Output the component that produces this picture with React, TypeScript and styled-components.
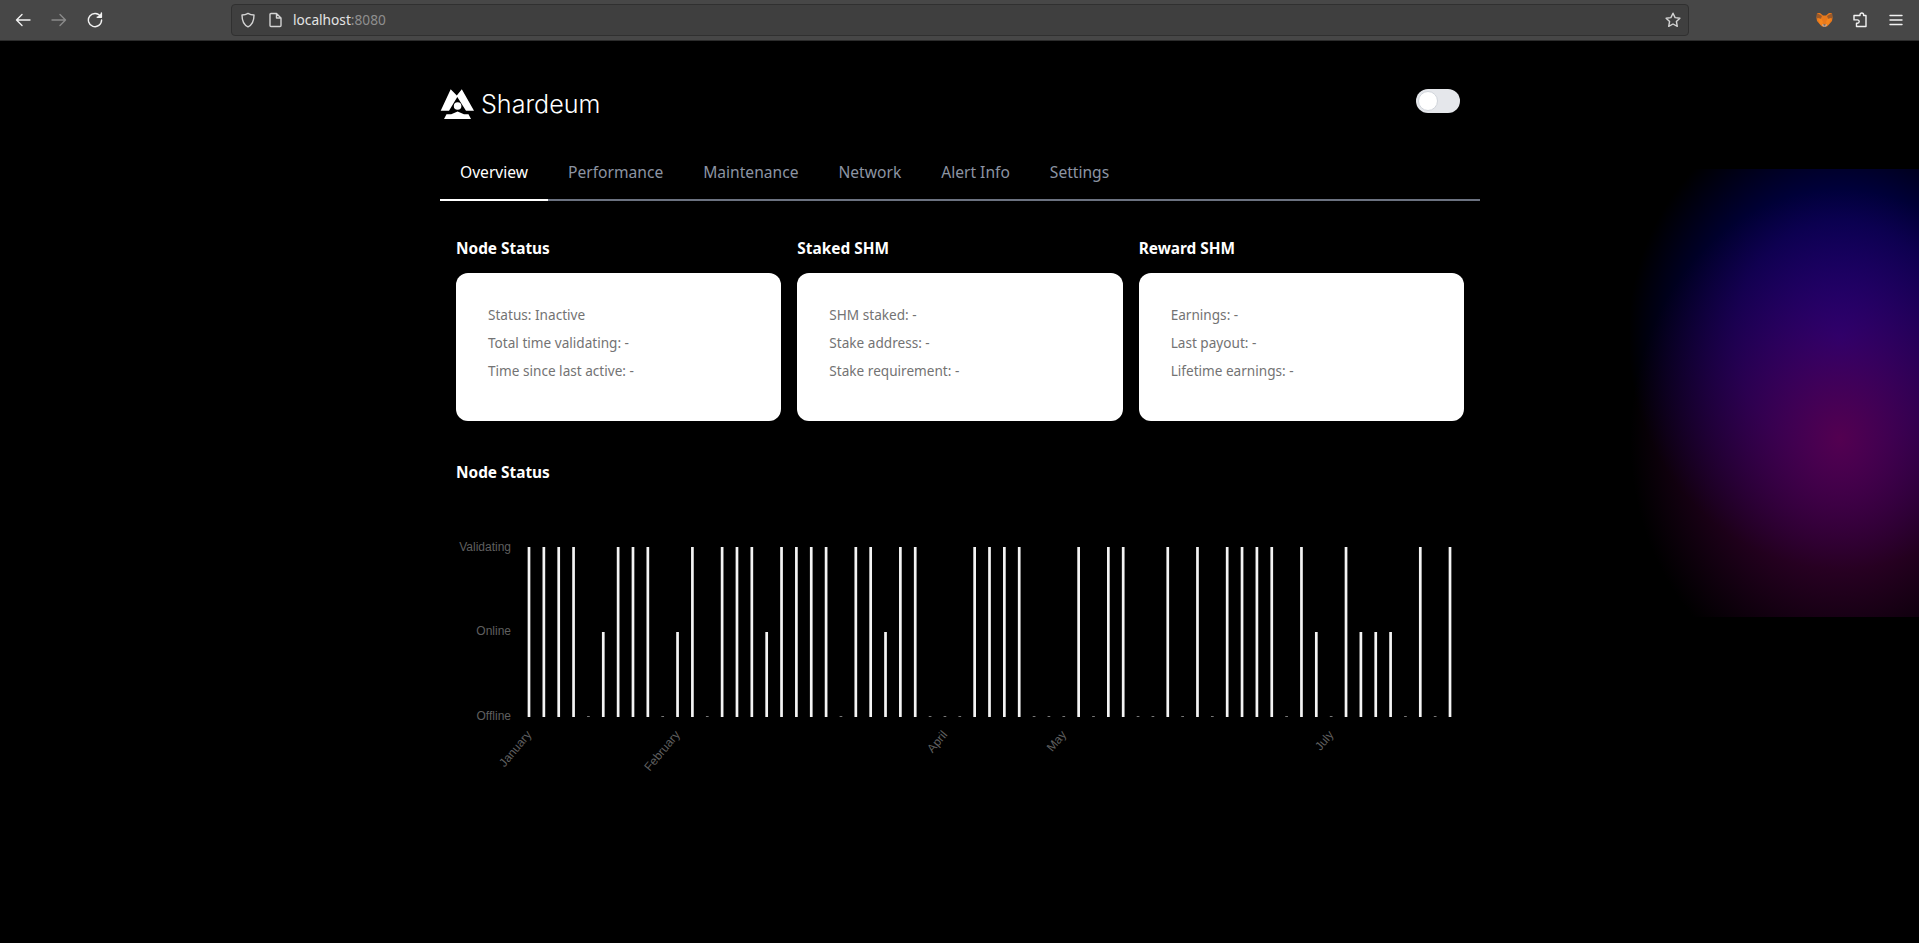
import React from "react";
import styled, { createGlobalStyle } from "styled-components";

const GlobalStyle = createGlobalStyle`
  html, body {
    margin: 0;
    padding: 0;
    height: 100%;
    background: #000;
    overflow: hidden;
  }
  * {
    box-sizing: border-box;
  }
`;

const Page = styled.div`
  position: relative;
  height: 943px;
  overflow: hidden;
  background: #000;
  font-family: "Noto Sans", "Open Sans", sans-serif;
`;

const Glow = styled.div`
  position: absolute;
  top: 169px;
  right: 0;
  width: 289px;
  height: 448px;
  background:
    radial-gradient(ellipse 210px 250px at 210px 270px, rgba(92, 0, 80, 0.9), rgba(92, 0, 80, 0) 100%),
    radial-gradient(ellipse 212px 232px at 210px 168px, #000086 0%, #000050 50%, #000028 75%, rgba(0, 0, 0, 0) 100%);
`;

const BrowserBar = styled.div`
  display: flex;
  align-items: center;
  height: 41px;
  padding: 0 14px 1px 5px;
  background: #474747;
  border-bottom: 1px solid #2c2c2c;
`;

const NavButton = styled.div<{ $color?: string }>`
  display: flex;
  align-items: center;
  justify-content: center;
  width: 36px;
  height: 32px;
  flex: none;
  color: ${(props) => props.$color || "#f2f2f2"};
`;

const NavGroup = styled.div`
  display: flex;
  align-items: center;
  margin-right: 118px;
`;

const UrlBar = styled.div`
  display: flex;
  align-items: center;
  width: 1458px;
  height: 32px;
  flex: none;
  padding: 0 7px 0 8px;
  background: #3f3f3f;
  border: 1px solid #303030;
  border-radius: 4px;
`;

const UrlText = styled.div`
  flex: 1;
  margin-left: 11px;
  font-size: 13.7px;
  color: #e4e4e4;
`;

const UrlPort = styled.span`
  color: #8f8f8f;
`;

const UrlIcon = styled.div<{ $gap?: number }>`
  display: flex;
  margin-right: ${(props) => props.$gap ?? 0}px;
  color: #d4d4d4;
`;

const ExtGroup = styled.div`
  display: flex;
  align-items: center;
  margin-left: 117px;
`;

const Main = styled.main`
  position: relative;
  width: 1040px;
  margin-left: 440px;
`;

const Header = styled.header`
  display: flex;
  align-items: flex-start;
  justify-content: space-between;
  padding: 47px 20px 0 0;
  height: 112px;
`;

const Brand = styled.div`
  display: flex;
  align-items: center;
  height: 32px;
`;

const BrandName = styled.span`
  margin-left: 6px;
  font-family: "Inter", sans-serif;
  font-weight: 300;
  font-size: 25.1px;
  line-height: 32px;
  color: #fff;
`;

const Toggle = styled.div`
  display: flex;
  align-items: center;
  width: 44px;
  height: 24px;
  margin-top: 1px;
  padding: 2px;
  background: #e5e7eb;
  border-radius: 12px;
`;

const Knob = styled.div`
  width: 20px;
  height: 20px;
  background: #fff;
  border: 1px solid #d1d5db;
  border-radius: 50%;
`;

const Tabs = styled.nav`
  display: flex;
  height: 48px;
  border-bottom: 2px solid #6b7280;
`;

const Tab = styled.div<{ $active?: boolean }>`
  height: 48px;
  padding: 0 20px;
  font-size: 15.6px;
  line-height: 38px;
  color: ${(props) => (props.$active ? "#fff" : "#8c94a3")};
  border-bottom: 2px solid ${(props) => (props.$active ? "#fff" : "transparent")};
`;

const Content = styled.section`
  padding: 36px 16px 0;
`;

const CardGrid = styled.div`
  display: grid;
  grid-template-columns: repeat(3, 1fr);
  column-gap: 16px;
`;

const SectionTitle = styled.h2`
  margin: 0 0 12px;
  font-size: 15.4px;
  font-weight: 700;
  line-height: 24px;
  color: #fff;
`;

const Card = styled.div`
  height: 148px;
  padding: 28px 32px;
  background: #fff;
  border-radius: 12px;
`;

const CardLine = styled.p`
  margin: 0;
  font-size: 13.6px;
  line-height: 28px;
  color: #737373;
`;

const ChartTitle = styled(SectionTitle)`
  margin: 40px 0 0;
`;

const ChartSvg = styled.svg`
  display: block;
  margin-top: 40px;
`;

const AxisLabel = styled.text`
  font-family: "Liberation Sans", Arial, sans-serif;
  font-size: 12px;
  fill: #5f5f5f;
`;

const ToolbarIcon = ({ children, w = 16, h = 16 }: { children: React.ReactNode; w?: number; h?: number }) => (
  <svg width={w} height={h} viewBox={`0 0 ${w} ${h}`} fill="none" stroke="currentColor" strokeWidth="1.4" strokeLinecap="round" strokeLinejoin="round">
    {children}
  </svg>
);

const Fox = () => (
  <svg width="17" height="15" viewBox="0 0 17 15">
    <path d="M1 1h3l3 2.500h3L13 1h3l.5 5-.5 3-3 3.500-2 2H6l-2-2L1 9 .5 6z" fill="#e8791c" />
    <path d="M1 1l5 3-1.500 3.500L1 6zM16 1l-5 3 1.500 3.500L16 6z" fill="#9c5a2a" />
    <path d="M2 6l3.500 1L7 10l-1 3-2-1zM15 6l-3.500 1L10 10l1 3 2-1z" fill="#f6851b" />
    <path d="M6 12.500h5l-1 2H7z" fill="#d7c1b3" />
    <path d="M7.500 12.500h2v1h-2z" fill="#233447" />
  </svg>
);

const Logo = () => (
  <svg width="35" height="32" viewBox="0 0 35 32">
    <path d="M.7 22.800 10.700 1.300 16.800 7.500 21.800 1.300 34 22.800H26L17.300 9 9 22.800z" fill="#fff" />
    <circle cx="17.600" cy="18" r="3.800" fill="#fff" />
    <path d="M17.600 23.400 24 26.300H28.500L31 31H4L6.500 26.300H11.200z" fill="#fff" />
  </svg>
);

const V = 2;
const O = 1;
const X = 0;

// one value per day, read off the chart
const statusData = [
  V, V, V, V, X, O, V, V, V, X, O, V, X, V, V, V, O, V, V, V, V, X, V, V, O, V, V, X,
  X, X, V, V, V, V, X, X, X, V, X, V, V, X, X, V, X, V, X, V, V, V, V, X, V, O, X, V,
  O, O, O, X, V, X, V,
];

const monthTicks = [
  { index: 0, label: "January" },
  { index: 10, label: "February" },
  { index: 28, label: "April" },
  { index: 36, label: "May" },
  { index: 54, label: "July" },
];

const yLabels = [
  { y: 22.5, label: "Validating" },
  { y: 106.5, label: "Online" },
  { y: 191.5, label: "Offline" },
];

const CHART_LEFT = 73;
const STEP = 14.855;
const BASE = 192;
const BAR_WIDTH = 2.7;
const heights = [1, 85, 170];

const StatusChart = () => (
  <ChartSvg width={1008} height={260} viewBox="0 0 1008 260">
    {yLabels.map((item) => (
      <AxisLabel key={item.label} x={55} y={item.y} textAnchor="end" dominantBaseline="middle">
        {item.label}
      </AxisLabel>
    ))}
    {statusData.map((value, i) => (
      <rect
        key={i}
        x={CHART_LEFT + i * STEP - BAR_WIDTH / 2}
        y={BASE - heights[value]}
        width={BAR_WIDTH}
        height={heights[value]}
        fill={value === X ? "#777" : "#f4f4f4"}
      />
    ))}
    {monthTicks.map((tick) => (
      <AxisLabel
        key={tick.label}
        textAnchor="end"
        transform={`translate(${CHART_LEFT + tick.index * STEP + 3} 210) rotate(-50)`}
      >
        {tick.label}
      </AxisLabel>
    ))}
  </ChartSvg>
);

const cards = [
  { title: "Node Status", lines: ["Status: Inactive", "Total time validating: -", "Time since last active: -"] },
  { title: "Staked SHM", lines: ["SHM staked: -", "Stake address: -", "Stake requirement: -"] },
  { title: "Reward SHM", lines: ["Earnings: -", "Last payout: -", "Lifetime earnings: -"] },
];

const tabs = ["Overview", "Performance", "Maintenance", "Network", "Alert Info", "Settings"];

export default function App() {
  return (
    <Page>
      <GlobalStyle />
      <Glow />
      <BrowserBar>
        <NavGroup>
          <NavButton>
            <ToolbarIcon>
              <path d="M15 8H1.500M7 2.500 1.500 8 7 13.500" />
            </ToolbarIcon>
          </NavButton>
          <NavButton $color="#8a8a8a">
            <ToolbarIcon>
              <path d="M1 8h13.500M9 2.500 14.500 8 9 13.500" />
            </ToolbarIcon>
          </NavButton>
          <NavButton>
            <ToolbarIcon>
              <path d="M13.600 4.600A6.600 6.600 0 1 0 14.600 8" />
              <path d="M14.400 1v4.200h-4.200" fill="currentColor" />
            </ToolbarIcon>
          </NavButton>
        </NavGroup>
        <UrlBar>
          <UrlIcon $gap={13}>
            <ToolbarIcon>
              <path d="M8 1.400c2 1.200 3.800 1.600 6 1.600 0 5-1 9.600-6 11.800C3 12.600 2 8 2 3c2.200 0 4-.4 6-1.600z" />
            </ToolbarIcon>
          </UrlIcon>
          <UrlIcon>
            <ToolbarIcon w={13} h={16}>
              <path d="M2 1.500h5.500L12 6v7.500a1 1 0 0 1-1 1H2a1 1 0 0 1-1-1v-11a1 1 0 0 1 1-1zM7.500 1.500V6H12" />
            </ToolbarIcon>
          </UrlIcon>
          <UrlText>
            localhost<UrlPort>:8080</UrlPort>
          </UrlText>
          <UrlIcon>
            <ToolbarIcon>
              <path d="m8 1.200 2.100 4.400 4.800.6-3.500 3.300.9 4.800L8 12l-4.300 2.300.9-4.800L1.100 6.200l4.800-.6z" />
            </ToolbarIcon>
          </UrlIcon>
        </UrlBar>
        <ExtGroup>
          <NavButton>
            <Fox />
          </NavButton>
          <NavButton>
            <ToolbarIcon>
              <path d="M6 3.500h2V2.800a1.800 1.800 0 0 1 3.600 0v.7H14v11H4.500v-3.200h1a1.700 1.700 0 0 0 0-3.400h-3.500V3.500z" />
            </ToolbarIcon>
          </NavButton>
          <NavButton>
            <ToolbarIcon>
              <path d="M2 3.500h12M2 8h12M2 12.500h12" />
            </ToolbarIcon>
          </NavButton>
        </ExtGroup>
      </BrowserBar>
      <Main>
        <Header>
          <Brand>
            <Logo />
            <BrandName>Shardeum</BrandName>
          </Brand>
          <Toggle>
            <Knob />
          </Toggle>
        </Header>
        <Tabs>
          {tabs.map((tab, i) => (
            <Tab key={tab} $active={i === 0}>
              {tab}
            </Tab>
          ))}
        </Tabs>
        <Content>
          <CardGrid>
            {cards.map((card) => (
              <div key={card.title}>
                <SectionTitle>{card.title}</SectionTitle>
                <Card>
                  {card.lines.map((line) => (
                    <CardLine key={line}>{line}</CardLine>
                  ))}
                </Card>
              </div>
            ))}
          </CardGrid>
          <ChartTitle>Node Status</ChartTitle>
          <StatusChart />
        </Content>
      </Main>
    </Page>
  );
}
